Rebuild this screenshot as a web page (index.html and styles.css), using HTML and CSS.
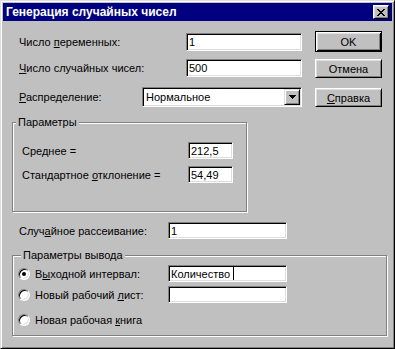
FILE: index.html
```html
<!DOCTYPE html>
<html lang="ru">
<head>
  <meta charset="UTF-8" />
  <title>Генерация случайных чисел</title>
  <link rel="stylesheet" href="styles.css">
</head>
<body>
  <div class="window">
    <div class="titlebar">
      <span class="title">Генерация случайных чисел</span>
      <button class="close">
        <svg width="8" height="7" viewBox="0 0 8 7" shape-rendering="crispEdges">
          <path d="M0 0h2v1h-2zM6 0h2v1h-2zM1 1h2v1h-2zM5 1h2v1h-2zM2 2h4v1h-4zM3 3h2v1h-2zM2 4h4v1h-4zM1 5h2v1h-2zM5 5h2v1h-2zM0 6h2v1h-2zM6 6h2v1h-2z" fill="#000"/>
        </svg>
      </button>
    </div>

    <div class="client">
      <div class="top">
        <div class="fields">
          <div class="row row-vars">
            <label class="lbl-wide">Число <u>п</u>еременных:</label>
            <div class="edit edit-top">1</div>
          </div>
          <div class="row row-count">
            <label class="lbl-wide"><u>Ч</u>исло случайных чисел:</label>
            <div class="edit edit-top">500</div>
          </div>
          <div class="row row-dist">
            <label class="lbl-dist"><u>Р</u>аспределение:</label>
            <div class="combo">
              <span class="combo-value">Нормальное</span>
              <span class="combo-arrow">
                <svg width="7" height="4" viewBox="0 0 7 4" shape-rendering="crispEdges">
                  <path d="M0 0h7v1h-1v1h-1v1h-1v1h-1v-1h-1v-1h-1v-1h-1z" fill="#000"/>
                </svg>
              </span>
            </div>
          </div>
        </div>
        <div class="buttons">
          <button class="btn btn-default">OK</button>
          <button class="btn btn-cancel">Отмена</button>
          <button class="btn btn-help"><u>С</u>правка</button>
        </div>
      </div>

      <div class="group params">
        <div class="group-title">Параметры</div>
        <div class="row prow prow-first">
          <label class="lbl-param">Сре<u>д</u>нее =</label>
          <div class="edit edit-small">212,5</div>
        </div>
        <div class="row prow">
          <label class="lbl-param">Стандартное <u>о</u>тклонение =</label>
          <div class="edit edit-small">54,49</div>
        </div>
      </div>

      <div class="row seed">
        <label class="lbl-seed">Случ<u>а</u>йное рассеивание:</label>
        <div class="edit edit-mid">1</div>
      </div>

      <div class="group output">
        <div class="group-title">Параметры вывода</div>
        <div class="row orow orow-1">
          <span class="radio checked"></span>
          <label class="lbl-radio">В<u>ы</u>ходной интервал:</label>
          <div class="edit edit-mid">Количество<span class="caret"></span></div>
        </div>
        <div class="row orow orow-2">
          <span class="radio"></span>
          <label class="lbl-radio">Новый рабочий <u>л</u>ист:</label>
          <div class="edit edit-mid"></div>
        </div>
        <div class="row orow orow-3">
          <span class="radio"></span>
          <label class="lbl-radio">Новая рабочая <u>к</u>нига</label>
        </div>
      </div>
    </div>
  </div>
</body>
</html>
```

FILE: styles.css
```css
* {
  box-sizing: border-box;
}
body {
  margin: 0;
  background: #c0c0c0;
  font-family: "Liberation Sans", Arial, sans-serif;
  font-size: 11px;
  color: #000;
}
u {
  text-decoration: underline;
  text-underline-offset: 1px;
}

/* window frame */
.window {
  width: 395px;
  height: 349px;
  background: #c0c0c0;
  border: 1px solid;
  border-color: #dfdfdf #000 #000 #dfdfdf;
  box-shadow: inset 1px 1px #fff, inset -1px -1px #808080;
  padding: 2px;
}
.titlebar {
  height: 18px;
  background: #000080;
  color: #fff;
  display: flex;
  align-items: center;
  justify-content: space-between;
  padding: 0 3px 0 3px;
}
.title {
  font-weight: bold;
  font-size: 12px;
}
.close {
  width: 16px;
  height: 14px;
  padding: 0;
  background: #c0c0c0;
  border: 1px solid;
  border-color: #fff #000 #000 #fff;
  box-shadow: inset 1px 1px #dfdfdf, inset -1px -1px #808080;
  display: flex;
  align-items: center;
  justify-content: center;
}

.client {
  padding: 12px 0 0 9px;
}
.top {
  display: flex;
  align-items: flex-start;
}
.fields {
  width: 290px;
}
.row {
  display: flex;
  align-items: center;
}
label {
  white-space: nowrap;
}

/* sunken controls */
.edit {
  height: 18px;
  background: #fff;
  border: 1px solid;
  border-color: #808080 #fff #fff #808080;
  box-shadow: inset 1px 1px #000, inset -1px -1px #dfdfdf;
  padding: 0 2px;
  display: flex;
  align-items: center;
  white-space: nowrap;
}
.caret {
  display: inline-block;
  width: 1px;
  height: 13px;
  background: #000;
  margin-left: 3px;
}

/* top rows */
.row-vars {
  height: 18px;
}
.row-count {
  height: 18px;
  margin-top: 8px;
}
.row-dist {
  height: 20px;
  margin-top: 10px;
}
.lbl-wide {
  width: 174px;
  padding-left: 7px;
}
.lbl-dist {
  width: 130px;
  padding-left: 7px;
}
.edit-top {
  width: 116px;
}
.combo {
  width: 160px;
  height: 20px;
  background: #fff;
  border: 1px solid;
  border-color: #808080 #fff #fff #808080;
  box-shadow: inset 1px 1px #000, inset -1px -1px #dfdfdf;
  padding: 1px;
  display: flex;
  align-items: stretch;
}
.combo-value {
  flex: 1;
  padding-left: 2px;
  display: flex;
  align-items: center;
}
.combo-arrow {
  width: 16px;
  background: #c0c0c0;
  border: 1px solid;
  border-color: #dfdfdf #000 #000 #dfdfdf;
  box-shadow: inset 1px 1px #fff, inset -1px -1px #808080;
  display: flex;
  align-items: center;
  justify-content: center;
}

/* push buttons */
.buttons {
  width: 67px;
  margin-left: 13px;
  margin-top: -2px;
  display: flex;
  flex-direction: column;
}
.btn {
  font: inherit;
  color: #000;
  padding: 0;
  background: #c0c0c0;
  border: 1px solid;
  border-color: #fff #000 #000 #fff;
  box-shadow: inset 1px 1px #dfdfdf, inset -1px -1px #808080;
}
.btn-default {
  height: 21px;
  border-color: #000;
  box-shadow: inset 1px 1px #fff, inset -1px -1px #000, inset 2px 2px #dfdfdf, inset -2px -2px #808080;
}
.btn-cancel {
  height: 19px;
  margin-top: 7px;
}
.btn-help {
  height: 19px;
  margin-top: 10px;
}

/* group boxes */
.group {
  border: 1px solid #808080;
  box-shadow: inset 1px 1px #fff, 1px 1px #fff;
}
.group-title {
  width: fit-content;
  margin: -7px 0 0 3px;
  padding: 0 2px;
  line-height: 13px;
  background: #c0c0c0;
}
.params {
  width: 235px;
  height: 90px;
  margin-top: 15px;
}
.prow {
  height: 17px;
  margin-top: 7px;
}
.prow-first {
  margin-top: 13px;
}
.lbl-param {
  width: 175px;
  padding-left: 9px;
}
.edit-small {
  width: 45px;
  height: 17px;
}

.seed {
  height: 17px;
  margin-top: 10px;
}
.lbl-seed {
  width: 156px;
  padding-left: 7px;
}
.edit-mid {
  width: 119px;
  height: 17px;
}

.output {
  width: 375px;
  height: 81px;
  margin-top: 16px;
  padding-left: 5px;
}
.orow {
  height: 17px;
}
.orow-1 {
  margin-top: 3px;
}
.orow-2 {
  margin-top: 4px;
}
.orow-3 {
  margin-top: 8px;
}
.lbl-radio {
  width: 138px;
  padding-left: 5px;
}
.radio {
  position: relative;
  flex: none;
  width: 12px;
  height: 12px;
  border-radius: 50%;
  background: #fff;
  border: 1px solid;
  border-color: #808080 #fff #fff #808080;
  box-shadow: inset 1px 1px #000, inset -1px -1px #dfdfdf;
}
.radio.checked::after {
  content: "";
  position: absolute;
  left: 3px;
  top: 3px;
  width: 4px;
  height: 4px;
  border-radius: 50%;
  background: #000;
}
```
